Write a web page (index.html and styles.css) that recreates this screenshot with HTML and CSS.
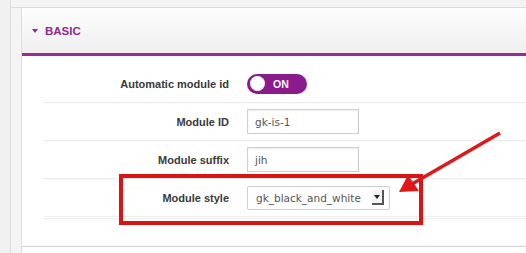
FILE: index.html
```html
<html>

<head>
    <link rel="stylesheet" href="styles.css">
</head>

<body>
    <div class="page">
        <div class="side"></div>
        <div class="main">
            <!-- basic settings panel -->
            <div class="panel">
                <div class="panel-head">
                    <span class="caret"></span>BASIC
                </div>
                <div class="panel-body">
                    <div class="row">
                        <div class="label">Automatic module id</div>
                        <div class="toggle"><span class="knob"></span>ON</div>
                    </div>
                    <div class="row">
                        <div class="label">Module ID</div>
                        <input type="text" class="field" value="gk-is-1" />
                    </div>
                    <div class="row">
                        <div class="label">Module suffix</div>
                        <input type="text" class="field" value="jih" />
                    </div>
                    <div class="row row-last">
                        <div class="label">Module style</div>
                        <div class="select">
                            <span>gk_black_and_white</span>
                            <span class="select-btn"></span>
                        </div>
                    </div>
                </div>
            </div>
            <div class="panel-next"></div>
        </div>
    </div>

    <!-- annotation -->
    <div class="mark"></div>
    <svg class="arrow" width="526" height="253" viewBox="0 0 526 253">
        <line x1="500" y1="133" x2="412" y2="184" stroke="#e01818" stroke-width="3.5" />
        <polygon points="399,192 408,175 419,191" fill="#e01818" />
    </svg>
</body>

</html>
```

FILE: styles.css
```css
* {
    margin: 0;
    padding: 0;
    box-sizing: border-box;
}

html {
    height: 100%;
    background: #f3f3f3;
}

body {
    font-family: "Liberation Sans", Arial, sans-serif;
    color: #333;
    overflow: hidden;
}

.page {
    display: flex;
    height: 253px;
}

.side {
    width: 11px;
    background: #f1f1f1;
    border-right: 1px solid #dcdcdc;
}

.main {
    flex: 1;
    margin-top: 7px;
    border-top: 1px solid #dcdcdc;
    padding-left: 10px;
    background: #f4f4f4;
}

.panel {
    background: white;
    border-left: 1px solid #dedede;
}

/*header*/

.panel-head {
    height: 48px;
    padding-left: 10px;
    display: flex;
    align-items: center;
    background: linear-gradient(#fdfdfd, #efefef);
    border-bottom: 3px solid #992a99;
    color: #8e2a8e;
    font-weight: bold;
    font-size: 11.5px;
}

.caret {
    width: 0;
    height: 0;
    border-left: 3px solid transparent;
    border-right: 3px solid transparent;
    border-top: 4px solid #8e2a8e;
    margin-right: 7px;
}

/*rows*/

.panel-body {
    padding: 9px 0 0 22px;
    height: 189px;
}

.row {
    display: flex;
    align-items: center;
    height: 38px;
    border-bottom: 1px solid #ececec;
    box-shadow: 0 1px 0 #fafafa;
}

.row-last {
    height: 40px;
    border-bottom: 3px double #efefef;
}

.label {
    width: 185px;
    margin-right: 18px;
    text-align: right;
    font-size: 11px;
    font-weight: bold;
    color: #3a3a3a;
}

.toggle {
    width: 60px;
    height: 20px;
    border-radius: 10px;
    background: #8b1a8b;
    color: white;
    font-size: 10.5px;
    font-weight: bold;
    display: flex;
    align-items: center;
    padding-left: 3px;
}

.knob {
    width: 15px;
    height: 15px;
    border-radius: 50%;
    background: white;
    margin-right: 8px;
}

.field {
    width: 112px;
    height: 25px;
    border: 1px solid #cfcfcf;
    box-shadow: inset 0 1px 2px rgba(0, 0, 0, 0.08);
    padding: 0 7px;
    font-family: "DejaVu Sans", sans-serif;
    font-size: 10.5px;
    color: #555;
}

.select {
    width: 143px;
    height: 24px;
    border: 1px solid #cfcfcf;
    border-radius: 2px;
    display: flex;
    align-items: center;
    justify-content: space-between;
    padding: 0 5px 0 8px;
    font-family: "DejaVu Sans", sans-serif;
    font-size: 10.5px;
    color: #555;
}

.select-btn {
    width: 12px;
    height: 15px;
    border-right: 2px solid #555;
    border-bottom: 2px solid #555;
    background: #f4f4f4;
    position: relative;
}

.select-btn:after {
    content: '';
    position: absolute;
    left: 2px;
    top: 5px;
    border-left: 3px solid transparent;
    border-right: 3px solid transparent;
    border-top: 4px solid #222;
}

.panel-next {
    height: 8px;
    margin-top: 1px;
    border-top: 1px solid #d6d6d6;
    border-left: 1px solid #dedede;
    background: white;
}

/*annotation*/

.mark {
    position: absolute;
    left: 119px;
    top: 174px;
    width: 304px;
    height: 51px;
    border: 4px solid #d81414;
}

.arrow {
    position: absolute;
    left: 0;
    top: 0;
}
```
